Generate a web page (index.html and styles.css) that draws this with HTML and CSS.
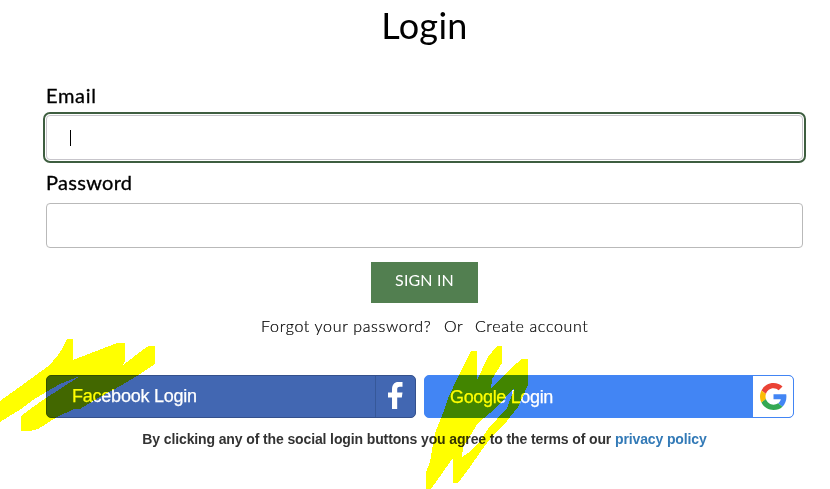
FILE: index.html
```html
<!DOCTYPE html>
<html lang="en">
<head>
<meta charset="utf-8">
<title>Login</title>
<link rel="stylesheet" href="styles.css">
</head>
<body>
<main class="login">
  <h1><span>Login</span></h1>
  <form class="form">
    <label for="email"><span class="email-label">Email</span></label>
    <div class="field focused" id="email"><i class="caret"></i></div>
    <label class="password-row" for="password"><span>Password</span></label>
    <div class="field" id="password"></div>
    <button class="submit" type="button">SIGN IN</button>
  </form>
  <nav class="links"><a class="forgot">Forgot your password?</a><span class="or">Or</span><a class="create">Create account</a></nav>
  <div class="social">
    <a class="provider facebook"><span>Facebook Login</span>
      <b class="icon"><svg width="16" height="27" viewBox="0 0 16 27"><path fill="#fff" d="M5 27V15.4H1V10.5H5V7.3C5 2.6 7.5 0 11.3 0H15.5V4.7H12.8C10.7 4.7 10.2 5.6 10.2 7.3V10.5H15.5L14.8 15.4H10.2V27Z"/></svg></b>
    </a>
    <a class="provider google"><span>Google Login</span>
      <b class="icon"><svg width="27" height="27" viewBox="0 0 48 48"><path fill="#ea4335" d="M24 9.5c3.54 0 6.71 1.22 9.21 3.6l6.85-6.85C35.9 2.38 30.47 0 24 0 14.62 0 6.51 5.38 2.56 13.22l7.98 6.19C12.43 13.72 17.74 9.5 24 9.5z"/><path fill="#4285f4" d="M46.98 24.55c0-1.57-.15-3.09-.38-4.55H24v9.02h12.94c-.58 2.96-2.26 5.48-4.78 7.18l7.73 6c4.51-4.18 7.09-10.36 7.09-17.65z"/><path fill="#fbbc05" d="M10.53 28.59c-.48-1.45-.76-2.99-.76-4.59s.27-3.14.76-4.59l-7.98-6.19C.92 16.46 0 20.12 0 24s.92 7.54 2.56 10.78l7.97-6.19z"/><path fill="#34a853" d="M24 48c6.48 0 11.93-2.13 15.89-5.81l-7.73-6c-2.15 1.45-4.92 2.3-8.16 2.3-6.26 0-11.57-4.22-13.47-9.91l-7.98 6.19C6.51 42.62 14.62 48 24 48z"/></svg></b>
    </a>
  </div>
  <p class="terms"><span>By clicking any of the social login buttons you agree to the terms of our <a>privacy policy</a></span></p>
</main>
<svg class="highlighter" width="830" height="489" viewBox="0 0 830 489" fill="#ff0" shape-rendering="crispEdges">
  <path d="M0 401L25 383L47 367Q61 354 65 343L67 339H73V360L112 345L117 343H125V361L123 365L144 349L149 346H155V364L140 374L122 385L100 397L80 409H74L57 417L38 429L30 431H21V416L33 407L46 398L60 389L80 376L60 384L46 392L33 400L21 409L0 422Z"/>
  <path fill-rule="evenodd" d="M471 351H477V380L488 357L497 346H502V363L492 379L491 389L511 368L522 359H528V385L518 407L503 426L493 435L481 451L470 467L458 483H453V458L443 472L431 489H426V472L430 462L435 433L443 413L449 396L458 377ZM515 387L496 408L478 423L469 438L463 447L462 457L468 453L480 441L488 429L507 408Z"/>
</svg>
</body>
</html>
```
FILE: styles.css
```css
* { box-sizing: border-box; }
body { margin: 0; height: 489px; overflow: hidden; background: #fff; color: #000; font-family: Lato, sans-serif; }
.login { width: 757px; margin-left: 46px; }
h1 { margin: 0; height: 82px; padding-top: 4px; font-size: 36px; line-height: 43px; font-weight: 400; text-align: center; letter-spacing: .3px; }
.form { display: flex; flex-direction: column; }
label { display: block; height: 33px; font-size: 20px; line-height: 27px; font-weight: 400; letter-spacing: .3px; -webkit-text-stroke: .3px #000; }
.password-row { line-height: 25px; }
.email-label { letter-spacing: .7px; }
.field { height: 45px; border: 1px solid #b9b9b9; border-radius: 4px; padding: 14px 0 0 23px; margin-bottom: 10px; }
.focused { outline: 2px solid #3e5e40; outline-offset: 1px; border-color: #c7c5cb; }
.caret { display: block; width: 1px; height: 16px; background: #000; }
#password { margin: 0 0 14px; }
.submit { align-self: center; width: 107px; height: 41px; padding: 0 0 6px; border: 0; background: #527f50; color: #fff; font: 16px Lato, sans-serif; letter-spacing: .15px; }
.links { display: flex; height: 72px; margin-left: 215px; padding-top: 11px; font-size: 16px; line-height: 24px; font-weight: 300; white-space: nowrap; -webkit-text-stroke: .2px #000; }
.forgot { width: 183px; letter-spacing: .67px; }
.or { width: 31px; letter-spacing: .6px; }
.create { letter-spacing: .63px; }
.social { display: flex; gap: 8px; }
.provider { display: flex; justify-content: space-between; height: 43px; width: 370px; border: 1px solid #34508c; border-radius: 5px; background: #4267b2; color: #fff; font: 18px/40px "Liberation Sans", sans-serif; letter-spacing: -.23px; padding-left: 25px; overflow: hidden; -webkit-text-stroke: .25px #fff; }
.provider .icon { display: flex; width: 40px; align-items: center; justify-content: center; }
.facebook .icon { border-left: 1px solid #365899; padding: 0 1px 3px 0; }
.google { border-color: #4285f4; background: #4285f4; line-height: 42px; letter-spacing: -.34px; }
.google .icon { background: #fff; border-radius: 0 4px 4px 0; }
.terms { margin: 13px 0 0; text-align: center; color: #333; font: bold 14px/17px "Liberation Sans", sans-serif; letter-spacing: -.12px; white-space: nowrap; }
.terms a { color: #337ab7; }
.highlighter { position: absolute; left: 0; top: 0; mix-blend-mode: multiply; pointer-events: none; }
```
